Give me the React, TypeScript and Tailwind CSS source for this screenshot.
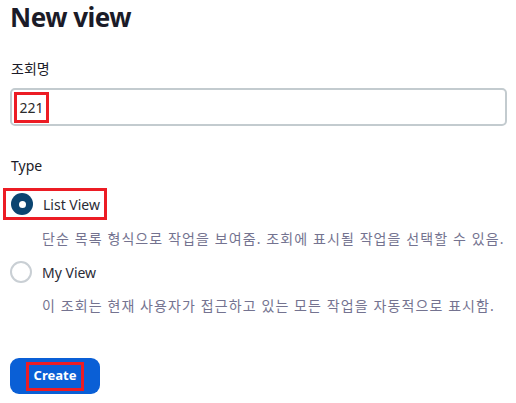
const font = { fontFamily: '"Noto Sans", "Noto Sans CJK KR", sans-serif' };

const Radio = ({ checked }: { checked: boolean }) =>
  checked ? (
    <span className="flex h-[22px] w-[22px] shrink-0 items-center justify-center rounded-full bg-[#0b4470]">
      <span className="h-[7px] w-[7px] rounded-full bg-white" />
    </span>
  ) : (
    <span className="h-[22px] w-[22px] shrink-0 rounded-full border-2 border-[#c9cfd4] bg-white" />
  );

const App = () => {
  return (
    <main className="min-h-screen bg-white" style={font}>
      <div className="px-[10px]">
        <h1 className="pt-[1px] text-[26px] leading-[33px] font-bold tracking-[-0.5px] text-[#1b1b28]">New view</h1>

        <p className="mt-[25px] ml-[1px] text-[14px] leading-[20px] text-[#1b1b28]">조회명</p>
        <div className="mt-[9px] flex h-[38px] w-[497px] items-center rounded-[5px] border-2 border-[#c3cbcf] pl-[2px]">
          <span className="flex h-[31px] w-[35px] items-center justify-center border-[3px] border-[#ec1c24] text-[14px] text-[#2b2b2b]">
            221
          </span>
        </div>

        <p className="mt-[30px] ml-[1px] text-[14px] leading-[20px] text-[#1b1b28]">Type</p>

        <div className="mt-[12px] -ml-[7px] flex h-[32px] w-[104px] items-center gap-[10px] border-[3px] border-[#ec1c24] pl-[5px]">
          <Radio checked />
          <span className="text-[14px] text-[#2b2b36]">List View</span>
        </div>
        <p className="mt-[9px] pl-[32px] text-[14px] leading-[20px] tracking-[1.1px] text-[#747390]">
          단순 목록 형식으로 작업을 보여줌. 조회에 표시될 작업을 선택할 수 있음.
        </p>

        <div className="mt-[12px] flex items-center gap-[10px]">
          <Radio checked={false} />
          <span className="text-[14px] text-[#2b2b36]">My View</span>
        </div>
        <p className="mt-[13px] pl-[32px] text-[14px] leading-[20px] tracking-[1.1px] text-[#747390]">
          이 조회는 현재 사용자가 접근하고 있는 모든 작업을 자동적으로 표시함.
        </p>

        <button className="mt-[42px] flex h-[36px] w-[90px] items-center justify-center rounded-[9px] bg-[#0a5fd6]">
          <span className="flex h-[29px] w-[58px] items-center justify-center border-[3px] border-[#ec1c24] text-[13px] font-bold text-white">
            Create
          </span>
        </button>
      </div>
    </main>
  );
};

export default App;
